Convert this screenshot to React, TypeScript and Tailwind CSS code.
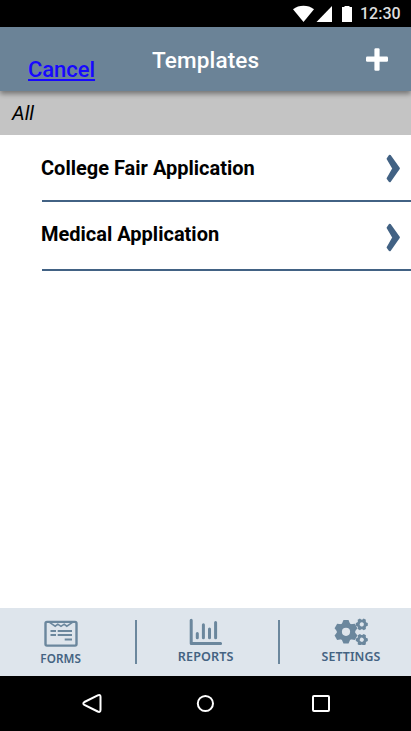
import React from "react";

function StatusBar() {
  return (
    <div className="flex h-[27px] shrink-0 justify-end bg-black pr-[10px] text-[#dedede]">
      <svg className="h-[27px] w-[60px]" viewBox="0 0 60 27" fill="#fff">
        <path d="M0 9.2C6 4.6 15 4.6 21 9.2L10.5 22Z" />
        <path d="M23.5 22H39V6Z" />
        <path d="M49 7h2.5V6h5v1H59v15H49Z" />
      </svg>
      <span className="ml-[7px] w-[41px] whitespace-nowrap text-[16px] font-medium leading-[27px]">12:30</span>
    </div>
  );
}

function Header() {
  return (
    <header className="relative z-10 flex h-16 shrink-0 bg-[#6b8397] shadow-[0_3px_5px_rgba(0,0,0,0.4)]">
      <a className="ml-[28px] mt-[29px] h-[27px] w-[124px] text-[22px] font-medium leading-[27px] tracking-[-0.05px] text-[#1708ff] underline decoration-[1.5px] underline-offset-[2px]">
        Cancel
      </a>
      <h1 className="mt-[20px] w-[214px] text-[22.5px] font-medium leading-[27px] tracking-[0.15px] text-white">Templates</h1>
      <svg className="mt-[21px] h-[23px] w-[22px]" viewBox="0 0 22 23" fill="#fff">
        <rect x="8.4" y="0.3" width="5.2" height="22.4" rx="1.3" />
        <rect x="0" y="8.6" width="22" height="5.2" rx="1.3" />
      </svg>
    </header>
  );
}

function Chevron({ className }: { className: string }) {
  return (
    <svg className={"h-[30px] w-[16px] shrink-0 " + className} viewBox="0 0 16 30">
      <path
        d="M4.8 1.7 13.9 14.4 4.8 27.3 2.6 24.4 8.3 14.4 2.6 4.8Z"
        fill="#426284"
        stroke="#426284"
        strokeWidth="2"
        strokeLinejoin="round"
      />
    </svg>
  );
}

function FormsIcon() {
  return (
    <svg className="h-[27px] w-[34px]" viewBox="0 0 34 27" fill="none" stroke="#6b879d">
      <rect x="1.5" y="1.9" width="31" height="23.7" rx="1.5" strokeWidth="2.4" />
      <path d="M5.5 2.4l5.7 3.8 2.6-2.1 3.2 2.3 3.2-2.3 2.6 2.1 5.7-3.8" strokeWidth="1.5" />
      <path d="M6.5 11H12M13.7 11H28M6.5 15H12M13.7 15H28M20.7 19.5H28" strokeWidth="2" />
    </svg>
  );
}

function ReportsIcon() {
  return (
    <svg className="h-[27px] w-[34px]" viewBox="0 0 34 27" fill="none" stroke="#6b879d" strokeLinecap="round" strokeLinejoin="round">
      <path d="M2.2 2.2V25.4H31.6" strokeWidth="3" />
      <path d="M8.3 15.5V19.7M14.4 6.7V19.7M20.5 11V19.7M26.6 4.4V19.7" strokeWidth="3" />
    </svg>
  );
}

const TEETH = [0, 60, 120];

function Gear({ cx, cy, r, turn = 0 }: { cx: number; cy: number; r: number; turn?: number }) {
  return (
    <g transform={`translate(${cx} ${cy}) rotate(${turn}) scale(${r / 10})`}>
      {TEETH.map((a) => (
        <path key={a} transform={`rotate(${a})`} d="M-2.2-10H2.2L3.6-6.5V6.5L2.2 10H-2.2L-3.6 6.5V-6.5Z" fill="#6b879d" />
      ))}
      <circle r="7.9" fill="#6b879d" />
      <circle r="3.5" fill="#dee5ec" />
    </g>
  );
}

function SettingsIcon() {
  return (
    <svg className="h-[27px] w-[34px]" viewBox="0 0 34 27">
      <Gear cx={12} cy={13.8} r={11.7} />
      <Gear cx={27.8} cy={6.4} r={6} turn={30} />
      <Gear cx={27.8} cy={21.8} r={6} turn={30} />
    </svg>
  );
}

function TabBar() {
  return (
    <nav className="flex h-[68px] shrink-0 bg-[#dee5ec] font-['Noto_Sans',sans-serif] text-[13px] font-semibold leading-[16px] tracking-[0.1px] text-[#446382]">
      <div className="flex w-[122px] flex-col items-center pt-[12px]">
        <FormsIcon />
        <span className="mt-[3px] origin-center scale-x-[0.9]">FORMS</span>
      </div>
      <i className="ml-[13px] mt-[12px] h-[44px] w-[2px] bg-[#6b879d]" />
      <div className="flex w-[138px] flex-col items-center pt-[10px]">
        <ReportsIcon />
        <span className="mt-[3px] origin-center scale-x-[0.97]">REPORTS</span>
      </div>
      <i className="ml-[3px] mt-[12px] h-[44px] w-[2px] bg-[#6b879d]" />
      <div className="flex w-[131px] flex-col items-center pl-[11px] pt-[10px]">
        <SettingsIcon />
        <span className="mt-[3px] origin-center scale-x-[0.95]">SETTINGS</span>
      </div>
    </nav>
  );
}

function SystemBar() {
  return (
    <div className="flex h-[55px] shrink-0 items-center justify-between bg-black pl-[80px] pr-[79px]">
      <svg className="h-[22px] w-[22px]" viewBox="0 0 22 22" fill="none" stroke="#fff" strokeWidth="2">
        <path d="M4.4 9 17.7 2.3Q20.5 1.1 20.5 3.8V16.8Q20.5 19.8 17.7 18.5L4.4 11.8Q2.3 10.4 4.4 9Z" />
      </svg>
      <svg className="h-[22px] w-[22px]" viewBox="0 0 22 22" fill="none" stroke="#fff" strokeWidth="2">
        <circle cx="10.4" cy="10.5" r="7.6" />
      </svg>
      <svg className="h-[22px] w-[22px]" viewBox="0 0 22 22" fill="none" stroke="#fff" strokeWidth="2">
        <rect x="3" y="3" width="16" height="15" rx="1" />
      </svg>
    </div>
  );
}

export default function App() {
  return (
    <div className="flex h-[731px] w-[411px] flex-col overflow-hidden bg-white font-[Roboto,sans-serif]">
      <StatusBar />
      <Header />
      <div className="h-[44px] shrink-0 bg-[#c4c4c4] pl-[12px] text-[20px] italic leading-[44px] text-black">All</div>
      <main className="flex-1 text-[20px] font-bold text-black">
        <div className="ml-[42px] flex h-[67px] items-start justify-between border-b-2 border-[#426284] pr-[10px]">
          <span className="-ml-px mt-[20px] leading-[26px]">College Fair Application</span>
          <Chevron className="mt-[19px]" />
        </div>
        <div className="ml-[42px] flex h-[69px] items-start justify-between border-b-2 border-[#426284] pr-[10px]">
          <span className="-ml-px mt-[19px] leading-[26px]">Medical Application</span>
          <Chevron className="mt-[21px]" />
        </div>
      </main>
      <TabBar />
      <SystemBar />
    </div>
  );
}
